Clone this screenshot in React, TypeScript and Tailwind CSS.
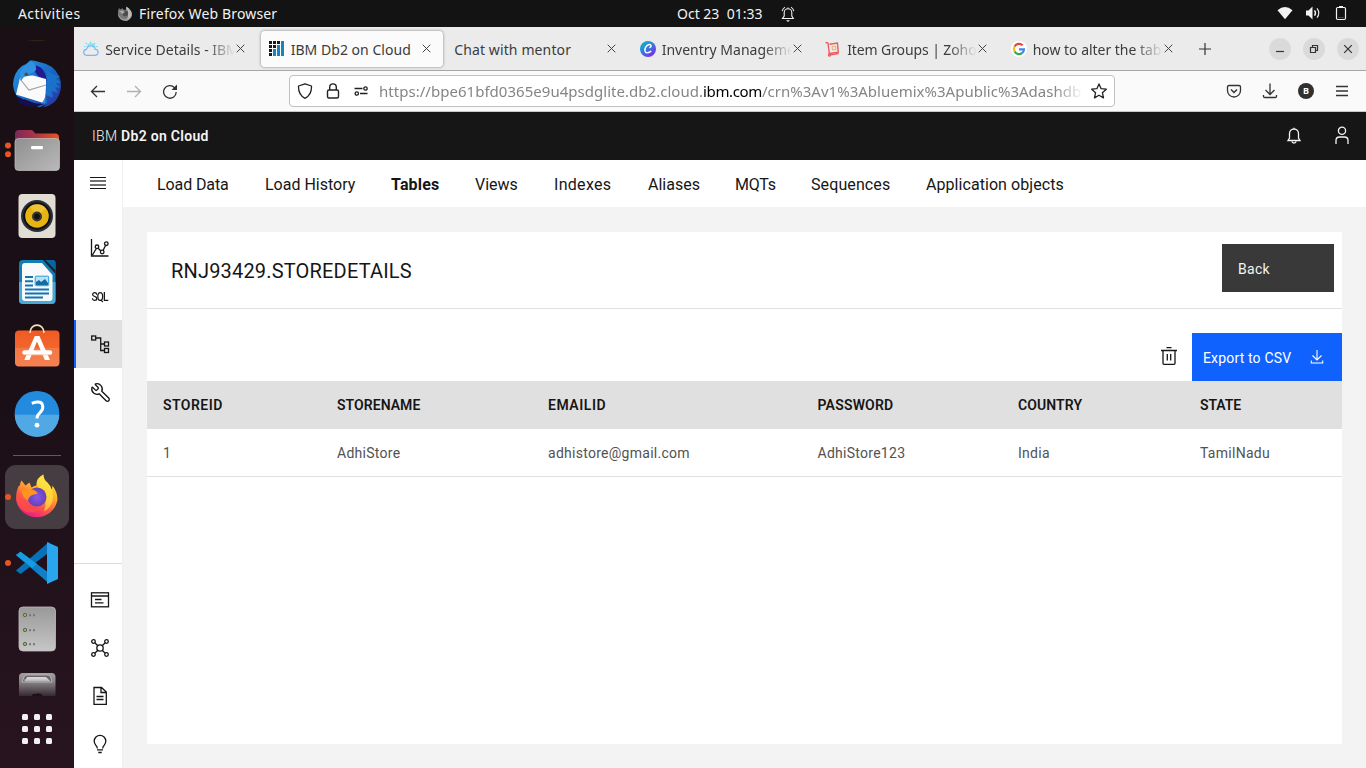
import React from "react";
import { Wrench } from "lucide-react";

type IconProps = { className?: string };

const ubuntu = "font-['Noto_Sans','Open_Sans',sans-serif]";
const plex = "font-['Roboto','Liberation_Sans',sans-serif]";

/* ---------- Top bar ---------- */

function FirefoxMono() {
  return (
    <svg viewBox="0 0 16 16" className="ml-[38px] h-4 w-4 shrink-0">
      <path d="M1 5 2 2l1.500 1.500L5.400 2 6 3.600 9.500 4 9 1l3 1.200L14 5l.9 3.200A7 7 0 0 1 1 9Z" fill="#777" />
      <path d="M9.500.5 12 2.800 14.600 6l.2 3A7 7 0 0 1 8 15l3-4V5L9 3Z" fill="#bbb" />
      <path d="M1 8a7 7 0 0 0 13.500 2q-2 3-6.500 3T1 8Z" fill="#9a9a9a" />
      <circle cx="8.300" cy="7.500" r="2.800" fill="#4c4c4c" />
      <path d="m2 5 3.500-.4L8 6 5.400 8Z" fill="#a8a8a8" />
    </svg>
  );
}

function TopBar() {
  return (
    <header className={`flex h-[27px] w-full shrink-0 items-center bg-[#131313] text-[14px] text-[#f2f2f2] ${ubuntu}`}>
      <span className="ml-[18px] w-[61px] tracking-[0.42px] whitespace-nowrap">Activities</span>
      <FirefoxMono />
      <span className="ml-[6px] w-[538px] tracking-[0.15px] whitespace-nowrap">Firefox Web Browser</span>
      <span className="w-[103px] pb-px whitespace-pre tracking-[0px]">Oct 23  01:33</span>
      <svg viewBox="0 0 16 18" className="h-[18px] w-4 shrink-0" fill="none" stroke="#f2f2f2" strokeWidth="1.1">
        <path d="M2.500 13.500h10.800L11.800 11V7.500a3.800 3.800 0 0 0-7.600 0V11ZM8 3.500V2.400" />
        <path d="M2.200 6.200A6.300 6.300 0 0 1 5 2.100M13.800 6.200A6.300 6.300 0 0 0 11 2.100" />
        <path d="M6 15.200h4L8 17Z" fill="#f2f2f2" stroke="none" />
      </svg>
      <div className="ml-auto flex items-center pb-px">
        <svg viewBox="0 0 16 14" className="h-[14px] w-4"><path d="M.5 4.200Q8-2.200 15.500 4.200L8 13.200Z" fill="#f2f2f2" /></svg>
        <svg viewBox="0 0 16 16" className="ml-[12px] h-4 w-4" fill="none" stroke="#f2f2f2">
          <path d="M1 5.500h2.500L7.500 1.500v13l-4-4H1Z" fill="#f2f2f2" stroke="none" />
          <path d="M9.500 5.300q2 2.700 0 5.400" strokeWidth="1.400" />
          <path d="M12 3.300q3.600 4.700 0 9.400" strokeWidth="1.100" />
        </svg>
        <svg viewBox="0 0 12 16" className="mr-[19px] ml-[14px] h-4 w-3" fill="none">
          <path d="M3 12.500h6" stroke="#c01818" strokeWidth="1" />
          <rect x="1.500" y="2.500" width="9" height="12" rx="1.200" stroke="#f2f2f2" strokeWidth="1.200" />
          <path d="M4 1h4v1.500H4Z" fill="#f2f2f2" />
        </svg>
      </div>
    </header>
  );
}

/* ---------- Dock ---------- */

function Slot({ children, dots = 0, active = false }: { children: React.ReactNode; dots?: number; active?: boolean }) {
  return (
    <svg viewBox="0 0 74 66" className="block h-[66px] w-[74px] shrink-0">
      {active && <rect x="5" y="1" width="64" height="64" rx="11" fill="#463d42" />}
      {dots === 1 && <circle cx="8" cy="33" r="3" fill="#e95420" />}
      {dots === 2 && <><circle cx="8" cy="28.500" r="3" fill="#e95420" /><circle cx="8" cy="37.300" r="3" fill="#e95420" /></>}
      {children}
    </svg>
  );
}

function Dock() {
  return (
    <aside className="flex w-[74px] shrink-0 flex-col overflow-hidden bg-linear-to-b from-[#1a0f15] via-[#1b0f17] to-[#28141f]">
      <svg viewBox="0 0 74 24" className="block h-6 w-[74px] shrink-0">
        <path d="M27 13.500h20q-10 1.600-20 0Z" fill="#40381f" />
      </svg>
      <Slot>
        <defs>
          <linearGradient id="tb" x1="0" y1="0" x2="1" y2="1"><stop offset="0" stopColor="#2b9bea" /><stop offset="0.550" stopColor="#1765bd" /><stop offset="1" stopColor="#302ba0" /></linearGradient>
        </defs>
        <path d="M22 15q5-2 8-5.500Q35 9 39 11q14 2 20 14 4 10 0 19-4 10-16 12.500l3-4-10 .5-12-5 2 5Q14 47 13 34q0-12 9-19Z" fill="url(#tb)" />
        <path d="M30 14Q45 13 47 30L38 25Z" fill="#211a93" />
        <path d="M20 27q8-3 13-2.500l13 3.500v7l-1 17.500-29-9Z" fill="#fafafa" />
        <path d="m20 28 9 11 17-5" fill="none" stroke="#9f9faa" strokeWidth="1.100" />
        <path d="M21 30q-4-10 5-16l5-4q6 3 5 9-2 3-8 4-4 2-7 7Z" fill="#2f91df" />
        <path d="M47 19q7 6 13 6l-4 3q4 2 5 4h-5l4 5-5-1 3 6-6-2 1 7-7-3 1 8q-6 5-10 4 8-5 9-14Z" fill="#1a75cf" opacity=".85" />
        <path d="M16 44.500q15 9 28 8.500-14 6-25-1Z" fill="#160f4c" />
        <circle cx="26.200" cy="23.200" r="1.700" fill="#5c4b34" />
      </Slot>
      <Slot dots={2}>
        <defs>
          <linearGradient id="fo" x1="0" x2="1"><stop offset="0" stopColor="#7c2958" /><stop offset="0.450" stopColor="#a93548" /><stop offset="1" stopColor="#e95420" /></linearGradient>
          <linearGradient id="fg" x1="0" y1="0" x2="1" y2="1"><stop offset="0" stopColor="#8f8f8f" /><stop offset="1" stopColor="#b9b9b9" /></linearGradient>
        </defs>
        <path d="M15 30V17q0-4 4-4h12q2 0 3 2t3 1.500h18q4 0 4 4V30Z" fill="url(#fo)" />
        <rect x="15" y="21.500" width="44.500" height="32" rx="3.500" fill="url(#fg)" stroke="#c3c3c3" strokeWidth=".7" />
        <rect x="31" y="29" width="12" height="3.200" rx="1.200" fill="#fff" />
      </Slot>
      <Slot>
        <rect x="18.500" y="11" width="37" height="44" rx="4" fill="#e1ddd2" />
        <circle cx="37" cy="33" r="16" fill="#2b3038" />
        <circle cx="37" cy="33" r="13.700" fill="#0e1013" />
        <circle cx="37" cy="33" r="11.800" fill="#e8b412" />
        <path d="M30 23.500A11.800 11.800 0 0 1 46 25.500L37 33Z" fill="#f3cf4b" opacity=".6" />
        <circle cx="37" cy="33.500" r="5" fill="#333" /><circle cx="37" cy="33.500" r="2.800" fill="#111" />
      </Slot>
      <Slot>
        <path d="M23 11h28.500q4 0 4 4v36q0 4-4 4H23q-4 0-4-4V15q0-4 4-4Z" fill="#137cb5" />
        <path d="M19 33h36.500v18q0 4-4 4H23q-4 0-4-4Z" fill="#48a9d8" />
        <path d="m43 11 12.500 14v-4L46 11Z" fill="#20242c" />
        <path d="M25 14h17l10.500 12v23q0 3-3 3H25q-3 0-3-3V17q0-3 3-3Z" fill="#f8f9fa" />
        <path d="M45.500 11H53q2.500 0 2.500 2.500V21Z" fill="#0b659e" />
        <path d="M25 28h8M25 32.200h8M25 36.400h8M25 40.600h24M25 44.600h24M25 48.500h18" stroke="#1275b5" strokeWidth="2" />
        <rect x="35.200" y="27.200" width="13.500" height="9.500" rx="1" fill="#b9e2f5" stroke="#2b9bd2" />
        <path d="m36 36 0-3 3-2 2 2 4-3 3 4v2Z" fill="#136da5" />
      </Slot>
      <Slot>
        <defs><linearGradient id="sw" x1="0" y1="0" x2="0" y2="1"><stop offset="0" stopColor="#f15a24" /><stop offset=".49" stopColor="#f3662f" /><stop offset=".5" stopColor="#f57743" /><stop offset="1" stopColor="#f38153" /></linearGradient></defs>
        <rect x="15" y="15.500" width="44.500" height="36" rx="4" fill="url(#sw)" />
        <path d="M30 18C30 7.500 44 7.500 44 18" fill="none" stroke="#f6dfb4" strokeWidth="1.600" />
        <path d="M34.800 21h4.600L50 45h-5.200L37 26.500 29.500 45h-5.200Z" fill="#fff" />
        <path d="M24.500 37.500h25.500" stroke="#fff" strokeWidth="4.500" strokeLinecap="round" />
        <path d="M25 39.800h24" stroke="#f5c9b4" strokeWidth=".8" />
      </Slot>
      <Slot>
        <g transform="translate(0 -0.8)">
          <circle cx="37" cy="33" r="22.300" fill="#238bdd" />
          <path d="M14.700 34.500h44.600A22.300 22.300 0 0 1 14.700 34.500Z" fill="#50a8e5" />
          <path d="M31.800 23.200q10.800-4 11 3.600 0 3.200-3 5.800-2.800 2.300-2.800 5.800" fill="none" stroke="#fff" strokeWidth="3" />
          <circle cx="37" cy="45" r="2.400" fill="#fff" />
        </g>
      </Slot>
      <div className="flex h-[17px] shrink-0 items-center justify-center"><div className="h-px w-12 bg-[#62595e]" /></div>
      <Slot dots={1} active>
        <defs>
          <linearGradient id="fx" x1=".8" y1="0" x2=".3" y2="1"><stop offset="0" stopColor="#fff44f" /><stop offset=".35" stopColor="#ffb52b" /><stop offset=".65" stopColor="#ff6140" /><stop offset="1" stopColor="#e91587" /></linearGradient>
          <radialGradient id="fp"><stop offset="0" stopColor="#8758ee" /><stop offset="1" stopColor="#6642b5" /></radialGradient>
        </defs>
        <g transform="translate(0 1.5)">
          <path d="M20 20q0-3 1.500-5l4 5 4-3 2 5q3-2 5-2-1-7 7-11 0 5 4 8 3 3 4 7 1-2 1-4 5 7 5 14a21 21 0 0 1-41.500 0q0-9 3-14Z" fill="url(#fx)" />
          <path d="M43 9q0 5 4 8 6 6 6 14 0 10-9 15 3-8 0-15-3-6-7-11 0-7 6-11Z" fill="#ffe541" opacity=".7" />
          <circle cx="37" cy="31.500" r="9.500" fill="url(#fp)" />
          <path d="m22 25 7-1q5-1 9 4l-4 1q-5 1-6 6-6-3-6-10Z" fill="#ff9420" />
          <path d="M19 20q-2 8 4 15 6 10 17 8-12 9-21-2-4-8-1-17Z" fill="#ff5242" opacity=".7" />
        </g>
      </Slot>
      <Slot dots={1}>
        <path d="m16 25 4.500-3.300L49 43v10.500Z" fill="#0e80c9" />
        <path d="m16 40.500 4.500 3.500L49 22.500V12Z" fill="#0872b9" />
        <path d="m16 25 4.500-3.300L37 34l-5 4Z" fill="#169ce2" />
        <path d="M47 12 58 17v32l-11 5V12Z" fill="#29a6ee" />
      </Slot>
      <Slot>
        <defs><linearGradient id="sv" x1="0" y1="0" x2="0" y2="1"><stop offset="0" stopColor="#999" /><stop offset="1" stopColor="#c6c6c6" /></linearGradient></defs>
        <rect x="19" y="11" width="36.500" height="44" rx="4" fill="url(#sv)" stroke="#bcbcbc" strokeWidth=".8" />
        {[19, 34, 48].map((y) => (
          <g key={y} fill="#777"><circle cx="25" cy={y} r="1.700" fill="#96b353" stroke="#5d6754" /><rect x="29" y={y - 0.8} width="2" height="2" /><rect x="33" y={y - 0.8} width="2" height="2" /></g>
        ))}
      </Slot>
      <svg viewBox="0 0 74 34" className="block h-[34px] w-[74px] shrink-0">
        <defs><linearGradient id="dr" x1="0" y1="0" x2="0" y2="1"><stop offset="0" stopColor="#a5a1a3" /><stop offset=".4" stopColor="#858083" /><stop offset="1" stopColor="#35292f" /></linearGradient></defs>
        <path d="M19 34V15q0-4 4-4h28.500q4 0 4 4v19Z" fill="url(#dr)" />
        <path d="m22 20 2-5q1-2 3-2h21q2 0 3 3l1 4Z" fill="#6b6669" stroke="#c5c2c3" strokeWidth=".8" />
        <path d="m25 19 2-4h19l4 4Z" fill="#d5d2d3" /><path d="M24 17.500h23l3 2H25Z" fill="#bdb8ba" />
        <path d="M32 34q0-3 4-2 4-2 7 2Z" fill="#191313" />
      </svg>
      <Slot>
        {[14, 26, 38].map((y) => [22, 34, 46].map((x) => <rect key={`${x}-${y}`} x={x} y={y + 4} width="6" height="6" rx="1.500" fill="#f2f0f1" />))}
      </Slot>
    </aside>
  );
}

/* ---------- Browser chrome ---------- */

function Close({ className = "" }: IconProps) {
  return <svg viewBox="0 0 9 9" className={`h-[9px] w-[9px] shrink-0 ${className}`}><path d="m.7.7 7.600 7.600M8.300.7.7 8.300" stroke="#444" strokeWidth="1" /></svg>;
}

function CloudIcon() {
  return (
    <svg viewBox="0 0 16 16" className="h-4 w-4" fill="none" strokeWidth="1.200">
      <path d="M4 14.300a3 3 0 0 1-.5-6 4.500 4.500 0 0 1 8.700 0 3 3 0 0 1-.2 6Z" stroke="#7bb4f7" />
      <path d="M4.500 5.500a3.800 3.800 0 0 1 7-.5q.5 1 .4 2M7.500.5v1.500M3 2l1 1M12 2l-1 1M1 5.500h1.500M13 5.500h1.500" stroke="#6fdcea" />
    </svg>
  );
}

function Db2Icon() {
  return (
    <svg viewBox="0 0 15 15" className="h-[15px] w-[15px]">
      {[0, 4, 8, 12].map((y) => [0, 4, 8, 12].map((x) => <rect key={`${x}${y}`} x={x} y={y} width="3" height="3" fill="#191919" />))}
      <path d="M4 8h3v7H4ZM8 4h3v11H8ZM12 0h3v15h-3Z" fill="#1785bd" />
    </svg>
  );
}

function CanvaIcon() {
  return (
    <svg viewBox="0 0 16 16" className="h-4 w-4">
      <defs><linearGradient id="cv" x1="0" y1="0" x2=".8" y2="1"><stop offset="0" stopColor="#00c4cc" /><stop offset=".55" stopColor="#3b73dd" /><stop offset="1" stopColor="#7d2ae8" /></linearGradient></defs>
      <circle cx="8" cy="8" r="8" fill="url(#cv)" />
      <path d="M10 6.500q1.500-.5 1-2.100-1.200-2-4 .2Q4.300 7.200 5 10q1 3.500 5.800.3" fill="none" stroke="#fff" strokeWidth="1.400" strokeLinecap="round" />
    </svg>
  );
}

function ZohoIcon() {
  return (
    <svg viewBox="0 0 16 16" className="h-4 w-4" fill="none" stroke="#ec5a62" strokeWidth="1.400">
      <path d="M.5 1.500 3 2l1.300 10.500 9-1.300L12.400 2 4.500 3.200" />
      <path d="m7 5.500 3.500-.5.500 3.500-3.500.5Z" stroke="#f2a96a" strokeWidth="1" />
      <circle cx="4.500" cy="14" r="1" /><path d="m6 13.700 7.500-1.200" />
    </svg>
  );
}

function GoogleIcon() {
  return (
    <svg viewBox="0 0 16 16" className="h-4 w-4">
      <circle cx="8" cy="8" r="8" fill="#fff" />
      <g fill="none" strokeWidth="2.200">
        <path d="M3.600 5.500a5 5 0 0 1 8-1.200" stroke="#ea4335" />
        <path d="M3.600 5.500a5 5 0 0 0 0 5" stroke="#fbbc05" />
        <path d="M3.600 10.500a5 5 0 0 0 7.700 1.400" stroke="#34a853" />
        <path d="M11.300 11.900a5 5 0 0 0 1.700-3.600H8" stroke="#4285f4" />
      </g>
    </svg>
  );
}

const tabs: { title: string; icon?: React.ReactNode; active?: boolean; tight?: string }[] = [
  { title: "Service Details - IBM C", icon: <CloudIcon /> },
  { title: "IBM Db2 on Cloud", icon: <Db2Icon />, active: true, tight: "tracking-[0.03px]" },
  { title: "Chat with mentor", tight: "tracking-[0.12px]" },
  { title: "Inventry Management", icon: <CanvaIcon /> },
  { title: "Item Groups | Zoho I", icon: <ZohoIcon />, tight: "tracking-[-0.1px]" },
  { title: "how to alter the table", icon: <GoogleIcon />, tight: "tracking-[-0.03px]" },
];

function TabStrip() {
  return (
    <div className="flex h-[44px] shrink-0 items-center border-b border-[#a7a7a7] bg-[#ebebeb]">
      {tabs.map((t) => (
        <div key={t.title} className="w-[185.5px] shrink-0 px-[1.2px]">
          <div className={`flex h-[36px] w-[182px] items-center rounded-[4px] pl-2 ${t.active ? "bg-[#fbfbfb] shadow-[0_0_3px_rgba(0,0,0,0.45)]" : ""}`}>
            {t.icon && <span className="flex w-[22px] shrink-0 items-center">{t.icon}</span>}
            <span className={`overflow-hidden pt-[2px] text-[14px] whitespace-nowrap text-[#3c3c3c] ${t.icon ? "w-[130px]" : "w-[152px]"} ${t.tight ?? ""} ${t.active || !t.icon ? "" : "mask-[linear-gradient(to_right,black_78%,transparent)]"}`}>{t.title}</span>
            <Close className="ml-px" />
          </div>
        </div>
      ))}
      <svg viewBox="0 0 12 12" className="ml-[12px] h-3 w-3"><path d="M6 0v12M0 6h12" stroke="#333" strokeWidth="1.200" /></svg>
      <div className="mr-[7px] ml-auto flex gap-[12px]">
        {["M7 13.500h8", "M7.500 9.500h5v5h-5zM9.500 9.300V7.500h5v5h-1.800", "m7.200 7.200 7.600 7.600M14.800 7.200l-7.600 7.600"].map((d) => (
          <span key={d} className="flex h-[22px] w-[22px] rounded-full bg-[#dadada]">
            <svg viewBox="0 0 22 22" className="h-[22px] w-[22px]"><path d={d} fill="none" stroke="#333" strokeWidth="1.200" /></svg>
          </span>
        ))}
      </div>
    </div>
  );
}

function Toolbar() {
  return (
    <div className="flex h-[41px] shrink-0 items-center border-b border-[#c8c8c8] bg-[#fafafa]">
      <svg viewBox="0 0 16 16" className="ml-4 h-4 w-4" fill="none" stroke="#333" strokeWidth="1.300"><path d="M15 8.500H1.500M7 3 1.500 8.500 7 14" /></svg>
      <svg viewBox="0 0 16 16" className="ml-5 h-4 w-4" fill="none" stroke="#b1b1b1" strokeWidth="1.300"><path d="M1 8.500h13.500M9 3 14.500 8.500 9 14" /></svg>
      <svg viewBox="0 0 16 16" className="ml-5 h-4 w-4" fill="none" stroke="#333" strokeWidth="1.300"><path d="M14.200 9A6.300 6.300 0 1 1 12.400 4.500L14 6" /><path d="M15 1.500V7H9.500Z" fill="#333" stroke="none" /></svg>
      <div className="ml-[111px] flex h-8 w-[826px] items-center rounded-[4px] border border-[#c1c1c1] bg-white">
        <svg viewBox="0 0 16 16" className="ml-[7px] h-4 w-4 shrink-0" fill="none" stroke="#222" strokeWidth="1.300"><path d="M8 .8 14.500 3q.3 9-6.500 12.300Q1.200 12 1.500 3Z" strokeLinejoin="round" /></svg>
        <svg viewBox="0 0 16 16" className="ml-3 h-4 w-4 shrink-0" fill="none" stroke="#222" strokeWidth="1.400"><rect x="2.500" y="7" width="11" height="8" rx="1.500" /><path d="M4.700 7V4.200a3.300 3.300 0 0 1 6.600 0V7" /></svg>
        <svg viewBox="0 0 16 16" className="ml-3 h-4 w-4 shrink-0" fill="none" stroke="#222" strokeWidth="1.300"><path d="M1.500 5.500h8M7 10.500h7.500" /><circle cx="12.500" cy="5.500" r="1.700" /><circle cx="3.800" cy="10.500" r="1.700" /></svg>
        <div className="ml-[10px] flex w-[704px] shrink-0 overflow-hidden text-[15px] whitespace-nowrap text-[#858585] mask-[linear-gradient(to_right,black_96%,transparent)]">
          <span className="w-[324px] shrink-0 tracking-[0.03px]">https://bpe61bfd0365e9u4psdglite.db2.cloud.</span>
          <span className="w-[59px] shrink-0 tracking-[-0.35px] text-black">ibm.com</span>
          <span className="tracking-[0.01px]">/crn%3Av1%3Abluemix%3Apublic%3Adashdb</span>
        </div>
        <svg viewBox="0 0 16 16" className="ml-[8px] h-4 w-4 shrink-0" fill="none" stroke="#222" strokeWidth="1.300"><path d="m8 .9 2.100 4.800 5.200.5-3.900 3.500 1.100 5.200L8 12.200l-4.500 2.700 1.100-5.200L.7 6.200l5.200-.5Z" strokeLinejoin="round" /></svg>
      </div>
      <div className="mr-[16px] ml-auto flex gap-5 text-[#333]">
        <svg viewBox="0 0 16 16" className="h-4 w-4" fill="none" stroke="currentColor" strokeWidth="1.300"><path d="M3 2.500h10q1.500 0 1.500 1.500v3.500a6.500 6.500 0 0 1-13 0V4Q1.500 2.500 3 2.500Z" /><path d="m5 6.500 3 3 3-3" strokeWidth="1.500" /></svg>
        <svg viewBox="0 0 16 16" className="h-4 w-4" fill="none" stroke="currentColor" strokeWidth="1.300"><path d="M8 .5v11M3.500 7 8 11.500 12.500 7M1.500 12v1.500q0 1 1.300 1h10.400q1.300 0 1.300-1V12" /></svg>
        <span className="flex h-4 w-4 items-center justify-center rounded-full bg-[#303030] text-[9px] font-bold text-white">B</span>
        <svg viewBox="0 0 16 16" className="h-4 w-4" fill="none" stroke="currentColor" strokeWidth="1.300"><path d="M2 3.500h12M2 8h12M2 12.500h12" /></svg>
      </div>
    </div>
  );
}

/* ---------- Db2 console ---------- */

function Glyph({ children }: { children: React.ReactNode }) {
  return <svg viewBox="0 0 20 20" className="h-5 w-5 shrink-0" fill="none" stroke="currentColor" strokeWidth="1.300">{children}</svg>;
}

function SideItem({ children, active = false }: { children: React.ReactNode; active?: boolean }) {
  return <div className={`flex h-12 shrink-0 items-center justify-center text-[#161616] ${active ? "border-l-2 border-[#0f62fe] bg-[#e0e0e0] pl-[2px]" : "pl-1"}`}>{children}</div>;
}

function Sidebar() {
  return (
    <nav className="flex w-[49px] shrink-0 flex-col border-r border-[#f0f0f0] bg-white">
      <div className="flex h-[64px] shrink-0 justify-center pt-[17px]">
        <svg viewBox="0 0 16 12" className="h-3 w-4" stroke="#161616"><path d="M0 .5h16M0 11.500h16" /><path d="M0 4h16M0 8h16" strokeWidth="1.400" stroke="#444" /></svg>
      </div>
      <SideItem><Glyph><path d="M1.500 1v17h17M2.500 17l3.800-6.500M8.200 10.200l2.700 2.800M13.200 12.300 15.500 7.500" /><circle cx="7" cy="8.800" r="1.800" /><circle cx="12.200" cy="14" r="1.800" /><circle cx="16.300" cy="5.700" r="1.800" /></Glyph></SideItem>
      <SideItem><span className="text-[12px] leading-none font-medium tracking-[-0.9px]"><span className="inline-block scale-x-[0.85] pt-px">SQL</span></span></SideItem>
      <SideItem active><Glyph><rect x="1.700" y="2" width="4" height="4" /><rect x="14.500" y="8" width="4" height="4" /><rect x="14.500" y="14.500" width="4" height="4" /><path d="M5.700 4h5v12.500h3.800M10.700 10h3.800" /></Glyph></SideItem>
      <SideItem><Wrench size={21} strokeWidth={1.500} className="-scale-x-100" /></SideItem>
      <div className="mt-[147px] h-px shrink-0 bg-[#dcdcdc]" />
      <div className="h-[12px] shrink-0" />
      <SideItem><Glyph><rect x="1.500" y="2.800" width="17" height="14" /><path d="M1.500 6h17M5 9.500h6.500M5 12.800h8.500" /></Glyph></SideItem>
      <SideItem><Glyph><circle cx="10" cy="10" r="3.200" /><circle cx="3.500" cy="3.500" r="1.800" /><circle cx="16.500" cy="3.500" r="1.800" /><circle cx="3.500" cy="16.500" r="1.800" /><circle cx="16.500" cy="16.500" r="1.800" /><path d="m4.800 4.800 3 3M15.200 4.800l-3 3M4.800 15.200l3-3M15.200 15.200l-3-3" /></Glyph></SideItem>
      <SideItem><Glyph><path d="M4 1.500h7.500L16.300 6v12.300H4ZM11 1.500V6.500h5.300M6.500 10.500h7M6.500 13.500h7" /></Glyph></SideItem>
      <SideItem><Glyph><path d="M7.300 14.500q0-2-1.500-3.300a5.800 5.800 0 1 1 8.400 0q-1.500 1.300-1.500 3.300M7 15.800h6M8.300 18.500h3.400" /></Glyph></SideItem>
    </nav>
  );
}

function ConsoleHeader() {
  return (
    <div className={`flex h-12 shrink-0 items-center bg-[#161616] text-[14px] text-[#f4f4f4] ${plex}`}>
      <span className="ml-[18px] tracking-[0.3px] whitespace-pre"><span className="font-light">IBM </span><b className="font-semibold">Db2 on Cloud</b></span>
      <div className="mr-[14px] ml-auto flex items-center gap-[28px]">
        <Glyph><path d="M10 3V1.800M4 14.500h12l-1.500-2.500V7.500a4.500 4.500 0 0 0-9 0V12ZM8 15.500q0 1.500 2 1.500t2-1.500" /></Glyph>
        <Glyph><circle cx="10" cy="4.800" r="3.600" /><path d="M4 18V14.500q0-3.500 3.500-3.500h5q3.500 0 3.500 3.500V18" /></Glyph>
      </div>
    </div>
  );
}

const sections = [
  { label: "Load Data", cls: "w-[108px] tracking-[-0.1px]" },
  { label: "Load History", cls: "w-[126px]" },
  { label: "Tables", cls: "w-[84px] font-bold tracking-[0.15px]" },
  { label: "Views", cls: "w-[79px]" },
  { label: "Indexes", cls: "w-[94px] tracking-[0.3px]" },
  { label: "Aliases", cls: "w-[87px]" },
  { label: "MQTs", cls: "w-[76px] tracking-[-0.2px]" },
  { label: "Sequences", cls: "w-[115px] tracking-[0.1px]" },
  { label: "Application objects", cls: "w-[140px] tracking-[0.06px]" },
];

const columns = [
  { name: "STOREID", value: "1", track: "tracking-[0.45px]" },
  { name: "STORENAME", value: "AdhiStore", track: "tracking-[0.05px]" },
  { name: "EMAILID", value: "adhistore@gmail.com", track: "tracking-[0.55px]" },
  { name: "PASSWORD", value: "AdhiStore123", track: "tracking-[0.2px]" },
  { name: "COUNTRY", value: "India", track: "tracking-[0.1px]" },
  { name: "STATE", value: "TamilNadu", track: "tracking-[-0.1px]" },
];

function Console() {
  return (
    <div className={`flex min-h-0 flex-1 ${plex}`}>
      <Sidebar />
      <main className="flex flex-1 flex-col bg-[#f3f3f3]">
        <div className="flex h-[47px] shrink-0 items-center bg-white pt-[3px] pl-[34px] text-[16px] text-[#161616]">
          {sections.map((s) => <span key={s.label} className={`shrink-0 whitespace-nowrap ${s.cls}`}>{s.label}</span>)}
        </div>
        <section className="mx-6 mt-[25px] mb-6 flex flex-1 flex-col bg-white">
          <div className="flex h-[77px] shrink-0 items-center justify-between border-b border-[#e0e0e0] pr-2 pl-6">
            <h1 className="pt-[2px] text-[20px] tracking-[0.18px] text-[#161616]">RNJ93429.STOREDETAILS</h1>
            <button className="mb-[4px] flex h-12 w-28 items-center bg-[#393939] pt-[3px] pl-4 text-[14px] tracking-[0.3px] text-[#f4f4f4]">Back</button>
          </div>
          <div className="mt-6 flex h-12 shrink-0 items-center justify-end">
            <svg viewBox="0 0 20 20" className="mr-[13px] mb-[2px] h-5 w-5 text-[#161616]" fill="none" stroke="currentColor" strokeWidth="1.300"><path d="M2 4.500h16M7.500 1.700h5M4 4.500v12.800q0 1 1 1h10q1 0 1-1V4.500M8.300 8v6.500M11.700 8v6.500" /></svg>
            <button className="flex h-12 w-[150px] items-center bg-[#0f62fe] pl-[11px] text-[14px] tracking-[0.16px] whitespace-nowrap text-white">
              <span className="w-[106px] pt-[3px] text-left">Export to CSV</span>
              <svg viewBox="0 0 16 16" className="h-4 w-4" fill="none" stroke="#fff" strokeWidth="1.100"><path d="M8 1v9.500M3.500 6.500 8 11l4.500-4.500M2.300 11.500V14h11.400v-2.500" /></svg>
            </button>
          </div>
          <div className="grid grid-cols-[174px_211px_269.500px_200.500px_182px_1fr] text-[14px]">
            {columns.map((c) => <div key={c.name} className={`flex h-12 items-center bg-[#e0e0e0] pt-px pl-4 font-semibold text-[#161616] ${c.track}`}>{c.name}</div>)}
            {columns.map((c) => <div key={c.name} className="flex h-12 items-center border-b border-[#e0e0e0] pt-[2px] pl-4 tracking-[0.27px] text-[#525252]">{c.value}</div>)}
          </div>
        </section>
      </main>
    </div>
  );
}

export default function App() {
  return (
    <div className="flex h-[768px] w-[1366px] flex-col overflow-hidden">
      <TopBar />
      <div className="flex min-h-0 flex-1">
        <Dock />
        <div className="flex min-w-0 flex-1 flex-col">
          <div className={`flex flex-col ${ubuntu}`}>
            <TabStrip />
            <Toolbar />
          </div>
          <ConsoleHeader />
          <Console />
        </div>
      </div>
    </div>
  );
}
